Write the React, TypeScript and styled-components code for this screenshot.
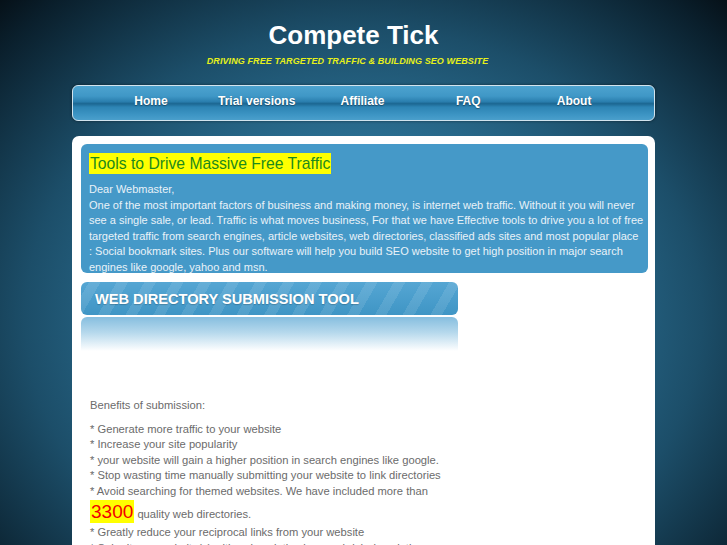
import { createGlobalStyle, styled } from "styled-components"

const GlobalStyle = createGlobalStyle`
    html, body {
        margin: 0;
        padding: 0;
    }

    body {
        min-height: 545px;
        overflow: hidden;
        font-family: "Liberation Sans", Arial, sans-serif;
        background: radial-gradient(ellipse 75% 85% at 50% 58%, #3a89b0 0%, #2c7296 35%, #1c4e69 62%, #0a1f2c 88%, #03080c 100%);
        background-attachment: fixed;
    }
`

const Page = styled.div`
    width: 583px;
    margin: 0 auto;
    padding-top: 20px;
`

const Header = styled.header`
    text-align: center;
    height: 65px;

    h1 {
        margin: 0;
        font-size: 26px;
        line-height: 30px;
        font-weight: bold;
        color: #ffffff;
        padding-right: 20px;
    }

    p {
        margin: 6px 0 0;
        font-size: 9px;
        font-weight: bold;
        font-style: italic;
        color: #e6f01a;
        letter-spacing: 0.1px;
        padding-right: 32px;
    }
`

const Nav = styled.nav`
    box-sizing: border-box;
    height: 36px;
    border: 1px solid #d2e4ee;
    border-radius: 6px;
    padding: 0 27px 0 25px;
    display: grid;
    grid-template-columns: repeat(5, 1fr);
    align-items: center;
    background: linear-gradient(to bottom,
        #4da3cf 0%, #3f97c6 30%, #2a7eae 46%, #1c6792 52%, #2d84b4 62%, #3d95c4 85%, #4a9fcc 100%);
    box-shadow: 0 0 3px rgba(0, 0, 0, 0.5);
`

const NavItem = styled.a`
    text-align: center;
    color: #ffffff;
    font-size: 12px;
    font-weight: bold;
    text-decoration: none;
    text-shadow: 0 1px 1px rgba(0, 0, 0, 0.35);
    padding-bottom: 4px;
`

const Panel = styled.main`
    margin-top: 15px;
    background: #ffffff;
    border-radius: 7px 7px 0 0;
    padding: 8px 7px 0 9px;
    height: 420px;
    overflow: hidden;
`

const IntroBox = styled.section`
    box-sizing: border-box;
    height: 129px;
    overflow: hidden;
    background: #4599c8;
    border-radius: 6px;
    padding: 9px 2px 0 8px;
    color: #e9f2f8;
    font-size: 11px;
    line-height: 15.6px;

    p {
        margin: 0;
    }
`

const Highlight = styled.h2`
    display: inline-block;
    margin: 0 0 8px;
    padding: 0 1px;
    background: #ffff00;
    color: #1c8a1c;
    font-size: 15.7px;
    font-weight: normal;
    line-height: 21px;
`

const ToolHeader = styled.h3`
    box-sizing: border-box;
    width: 377px;
    height: 33px;
    margin: 9px 0 0;
    padding: 0 14px;
    border-radius: 6px;
    display: flex;
    align-items: center;
    color: #ffffff;
    font-size: 14.6px;
    font-weight: bold;
    text-shadow: 0 1px 1px rgba(0, 0, 0, 0.2);
    background:
        repeating-linear-gradient(-60deg, rgba(255, 255, 255, 0) 0 14px, rgba(255, 255, 255, 0.1) 14px 24px),
        linear-gradient(to bottom, #55a6d3, #3f95c5);
`

const Reflection = styled.div`
    width: 377px;
    height: 34px;
    margin-top: 2px;
    border-radius: 6px 6px 0 0;
    background: linear-gradient(to bottom, #86bedf 0%, #b5d8ec 45%, #ffffff 100%);
`

const Content = styled.div`
    padding: 47px 0 0 9px;
    color: #6b6b6b;
    font-size: 11.2px;
    line-height: 15.5px;

    p {
        margin: 0 0 8px;
    }

    ul {
        margin: 0;
        padding: 0;
        list-style: none;
    }
`

const Big = styled.span`
    display: inline-block;
    background: #ffff00;
    color: #f20000;
    font-size: 19px;
    line-height: 23px;
    padding: 0 1px;
    margin: 1px 0 2px;
`

const introLines = [
    "One of the most important factors of business and making money, is internet web traffic. Without it you will never",
    "see a single sale, or lead. Traffic is what moves business, For that we have Effective tools to drive you a lot of free",
    "targeted traffic from search engines, article websites, web directories, classified ads sites and most popular place",
    ": Social bookmark sites. Plus our software will help you build SEO website to get high position in major search",
    "engines like google, yahoo and msn.",
]

const benefits = [
    "Generate more traffic to your website",
    "Increase your site popularity",
    "your website will gain a higher position in search engines like google.",
    "Stop wasting time manually submitting your website to link directories",
    "Avoid searching for themed websites. We have included more than",
]

const navItems = ["Home", "Trial versions", "Affiliate", "FAQ", "About"]

export default () => <>
    <GlobalStyle />
    <Page>
        <Header>
            <h1>Compete Tick</h1>
            <p>DRIVING FREE TARGETED TRAFFIC &amp; BUILDING SEO WEBSITE</p>
        </Header>
        <Nav>
            {navItems.map(item => <NavItem key={item} href="#">{item}</NavItem>)}
        </Nav>
        <Panel>
            <IntroBox>
                <Highlight>Tools to Drive Massive Free Traffic</Highlight>
                <p>Dear Webmaster,</p>
                <p>
                    {introLines.map((line, i) => <span key={i}>{line}{i < introLines.length - 1 && <br />}</span>)}
                </p>
            </IntroBox>
            <ToolHeader>WEB DIRECTORY SUBMISSION TOOL</ToolHeader>
            <Reflection />
            <Content>
                <p>Benefits of submission:</p>
                <ul>
                    {benefits.map(b => <li key={b}>* {b}</li>)}
                    <li><Big>3300</Big> quality web directories.</li>
                    <li>* Greatly reduce your reciprocal links from your website</li>
                    <li>* Submit your website(s) with a descriptive keyword-rich description</li>
                </ul>
            </Content>
        </Panel>
    </Page>
</>
